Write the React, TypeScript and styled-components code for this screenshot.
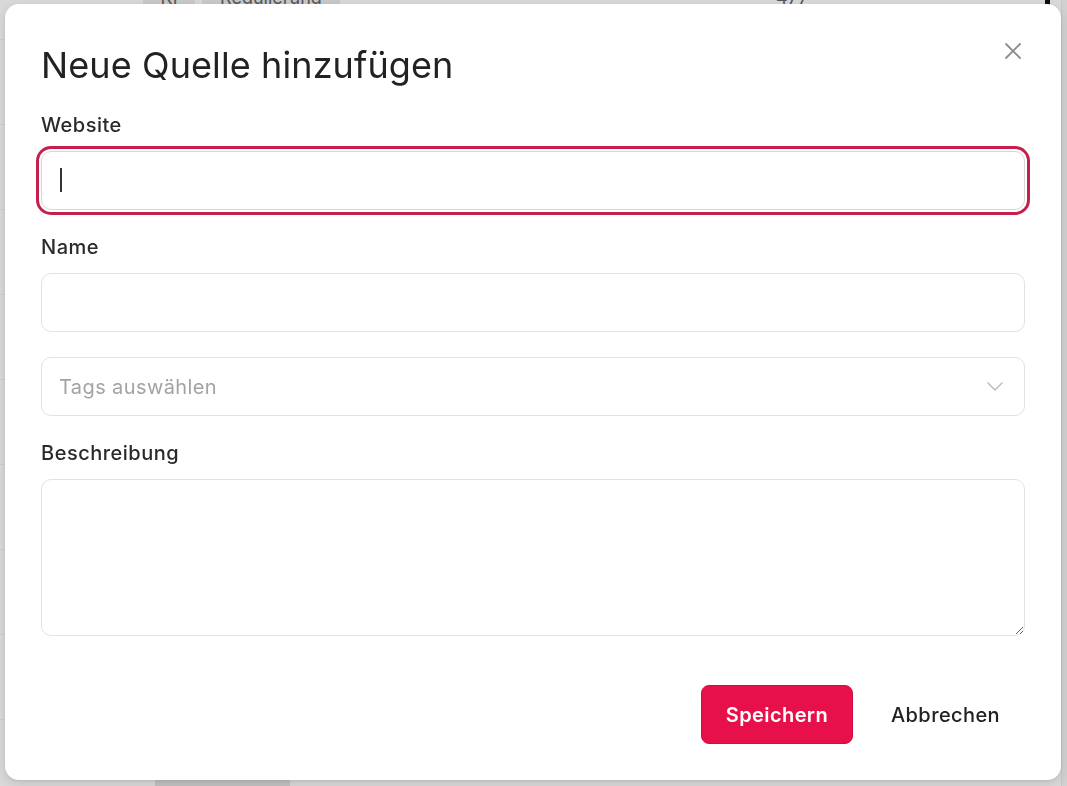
import styled, { createGlobalStyle } from 'styled-components'

const GlobalStyle = createGlobalStyle`
  * { box-sizing: border-box; }
  html, body { margin: 0; height: 100%; overflow: hidden; }
  body {
    font-family: Inter, 'Noto Sans', 'Liberation Sans', sans-serif;
    background: #fff;
    color: #222;
  }
`

const Page = styled.div`
  height: 100vh;
  overflow: hidden;
  display: grid;
  grid-template-columns: 1fr 6px;
`

const Table = styled.div`
  margin-top: -45px;
  display: flex;
  flex-direction: column;
`

const Row = styled.div`
  height: 85px;
  flex: none;
  display: flex;
  align-items: center;
  border-bottom: 1px solid #f2f2f2;
  padding-left: 143px;
  font-size: 18px;
  color: #666;
`

const Pill = styled.span<{ width: number }>`
  width: ${({ width }) => width}px;
  height: 26px;
  margin-right: 7px;
  border-radius: 4px;
  background: #ececec;
  display: flex;
  align-items: center;
  justify-content: center;
`

const LowerPill = styled.span`
  align-self: flex-end;
  margin: 0 0 2px 12px;
  width: 135px;
  height: 24px;
  border-radius: 4px;
  background: #e4e4e4;
`

const Count = styled.span`
  margin-left: auto;
  width: 256px;
`

const RowIcon = styled.span`
  width: 18px;
  height: 22px;
  margin-right: 11px;
  border-right: 5px solid #111;
`

const Scrollbar = styled.div`
  background: #f6f6f6;
  border-left: 1px solid #eaeaea;
`

const Overlay = styled.div`
  position: fixed;
  inset: 0;
  background: rgba(0, 0, 0, 0.15);
`

const Modal = styled.div`
  position: fixed;
  left: 5px;
  top: 4px;
  width: 1056px;
  height: 776px;
  background: #fff;
  border-radius: 14px;
  box-shadow: 0 4px 14px rgba(0, 0, 0, 0.12), 0 1px 3px rgba(0, 0, 0, 0.08);
  padding: 41px 36px 0;
  display: flex;
  flex-direction: column;
`

const Title = styled.h2`
  margin: 0 0 28px;
  font-size: 36px;
  line-height: 40px;
  font-weight: 400;
  color: #222;
  letter-spacing: 0.1px;
`

const CloseButton = styled.button`
  position: absolute;
  top: 33px;
  right: 34px;
  width: 28px;
  height: 28px;
  padding: 0;
  border: none;
  background: none;
  display: grid;
  place-items: center;
  color: #8c8c8c;
  cursor: pointer;
`

const Field = styled.div`
  display: flex;
  flex-direction: column;
  gap: 14px;
  margin-bottom: 25px;
`

const Label = styled.label`
  font-size: 20px;
  line-height: 24px;
  font-weight: 500;
  letter-spacing: 0.5px;
  color: #2a2a2a;
`

const InputWrap = styled.div`
  position: relative;
`

const Input = styled.input<{ focused?: boolean }>`
  width: 100%;
  height: 59px;
  border: 1px solid ${({ focused }) => (focused ? '#d8d8d8' : '#e2e2e2')};
  border-radius: 10px;
  padding: 0 18px;
  font: inherit;
  font-size: 20px;
  color: #222;
  outline: none;
  caret-color: transparent;
  box-shadow: ${({ focused }) => (focused ? '0 0 0 2px #fff, 0 0 0 5px #c51f4c' : 'none')};
`

const Caret = styled.span`
  position: absolute;
  left: 19px;
  top: 17px;
  width: 2px;
  height: 24px;
  background: #333;
`

const Select = styled.div`
  height: 59px;
  border: 1px solid #e2e2e2;
  border-radius: 10px;
  padding: 0 21px 0 17px;
  display: flex;
  align-items: center;
  justify-content: space-between;
  margin-bottom: 25px;
`

const Placeholder = styled.span`
  font-size: 20px;
  letter-spacing: 0.4px;
  color: #a3a3a3;
`

const TextArea = styled.textarea`
  width: 100%;
  height: 157px;
  border: 1px solid #e2e2e2;
  border-radius: 10px;
  padding: 14px 18px;
  font: inherit;
  font-size: 20px;
  outline: none;
  resize: vertical;
  display: block;
`

const Footer = styled.div`
  margin-top: 24px;
  display: flex;
  justify-content: flex-end;
  gap: 13px;
`

const Button = styled.button<{ primary?: boolean }>`
  height: 59px;
  padding: 0 24px;
  border-radius: 8px;
  font-family: inherit;
  font-size: 20px;
  letter-spacing: 0.4px;
  font-weight: ${({ primary }) => (primary ? 600 : 500)};
  color: ${({ primary }) => (primary ? '#fff' : '#222')};
  background: ${({ primary }) => (primary ? '#e8104a' : 'transparent')};
  border: 1px solid ${({ primary }) => (primary ? '#d30d42' : 'transparent')};
  cursor: pointer;
`

export default function App() {
  return (
    <>
      <GlobalStyle />
      <Page>
        <Table>
          {Array.from({ length: 11 }).map((_, i) => (
            <Row key={i}>
              {i === 0 && (
                <>
                  <Pill width={52}>KI</Pill>
                  <Pill width={138}>Regulierung</Pill>
                  <Count>477</Count>
                  <RowIcon />
                </>
              )}
              {i === 9 && <LowerPill />}
            </Row>
          ))}
        </Table>
        <Scrollbar />
      </Page>

      <Overlay />

      <Modal>
        <Title>Neue Quelle hinzufügen</Title>
        <CloseButton aria-label='Schließen'>
          <svg width='16' height='16' viewBox='0 0 16 16'>
            <path d='M1 1 L15 15 M15 1 L1 15' stroke='currentColor' strokeWidth='1.8' strokeLinecap='round' />
          </svg>
        </CloseButton>

        <Field>
          <Label>Website</Label>
          <InputWrap>
            <Input focused />
            <Caret />
          </InputWrap>
        </Field>

        <Field>
          <Label>Name</Label>
          <Input />
        </Field>

        <Select>
          <Placeholder>Tags auswählen</Placeholder>
          <svg width='16' height='9' viewBox='0 0 16 9'>
            <path d='M1 1 L8 8 L15 1' fill='none' stroke='#bdbdbd' strokeWidth='1.5' strokeLinecap='round' strokeLinejoin='round' />
          </svg>
        </Select>

        <Field>
          <Label>Beschreibung</Label>
          <TextArea />
        </Field>

        <Footer>
          <Button primary>Speichern</Button>
          <Button>Abbrechen</Button>
        </Footer>
      </Modal>
    </>
  )
}
